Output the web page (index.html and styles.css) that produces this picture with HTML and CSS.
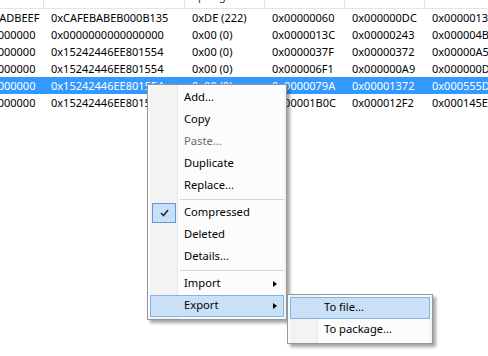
FILE: index.html
```html
<!DOCTYPE html>
<html lang="en">
<head>
  <meta charset="UTF-8">
  <title>Entries</title>
  <link rel="stylesheet" href="styles.css">
</head>
<body>
  <div class="view">
    <div class="grid">
      <div class="row head">
        <div class="cell c1"><span>Hash</span></div>
        <div class="cell c2"><span>Name hash</span></div>
        <div class="cell c3"><span>Spring</span></div>
        <div class="cell c4"><span>Offset</span></div>
        <div class="cell c5"><span>Size</span></div>
        <div class="cell c6"><span>Raw size</span></div>
      </div>
      <div class="row">
        <div class="cell c1">0xDEADBEEF</div>
        <div class="cell c2">0xCAFEBABEB000B135</div>
        <div class="cell c3">0xDE (222)</div>
        <div class="cell c4">0x00000060</div>
        <div class="cell c5">0x000000DC</div>
        <div class="cell c6">0x00000135</div>
      </div>
      <div class="row">
        <div class="cell c1">0x00000000</div>
        <div class="cell c2">0x0000000000000000</div>
        <div class="cell c3">0x00 (0)</div>
        <div class="cell c4">0x0000013C</div>
        <div class="cell c5">0x00000243</div>
        <div class="cell c6">0x000004BD</div>
      </div>
      <div class="row">
        <div class="cell c1">0x00000000</div>
        <div class="cell c2">0x15242446EE801554</div>
        <div class="cell c3">0x00 (0)</div>
        <div class="cell c4">0x0000037F</div>
        <div class="cell c5">0x00000372</div>
        <div class="cell c6">0x00000A53</div>
      </div>
      <div class="row">
        <div class="cell c1">0x00000000</div>
        <div class="cell c2">0x15242446EE801554</div>
        <div class="cell c3">0x00 (0)</div>
        <div class="cell c4">0x000006F1</div>
        <div class="cell c5">0x000000A9</div>
        <div class="cell c6">0x000000D2</div>
      </div>
      <div class="row selected">
        <div class="cell c1">0x00000000</div>
        <div class="cell c2">0x15242446EE801554</div>
        <div class="cell c3">0x00 (0)</div>
        <div class="cell c4">0x0000079A</div>
        <div class="cell c5">0x00001372</div>
        <div class="cell c6">0x000555D4</div>
      </div>
      <div class="row">
        <div class="cell c1">0x00000000</div>
        <div class="cell c2">0x15242446EE801554</div>
        <div class="cell c3">0x00 (0)</div>
        <div class="cell c4">0x00001B0C</div>
        <div class="cell c5">0x000012F2</div>
        <div class="cell c6">0x000145E0</div>
      </div>
    </div>

    <!-- context menu -->
    <div class="menu main-menu">
      <div class="item">Add...</div>
      <div class="item">Copy</div>
      <div class="item disabled">Paste...</div>
      <div class="item">Duplicate</div>
      <div class="item">Replace...</div>
      <div class="sep"></div>
      <div class="item checked">
        <span class="check">
          <svg width="9" height="8" viewBox="0 0 9 8"><path d="M1 4 L3.5 6.5 L8 1" fill="none" stroke="#1c2a3a" stroke-width="1.6"/></svg>
        </span>
        Compressed
      </div>
      <div class="item">Deleted</div>
      <div class="item">Details...</div>
      <div class="sep"></div>
      <div class="item sub">Import<span class="arrow"></span></div>
      <div class="item sub hot">Export<span class="arrow"></span></div>
    </div>

    <div class="menu sub-menu">
      <div class="item hot">To file...</div>
      <div class="item">To package...</div>
    </div>
  </div>
</body>
</html>
```

FILE: styles.css
```css
body {
  margin: 0;
  background: #fff;
  font-family: "Segoe UI", "Noto Sans", sans-serif;
  color: #000;
}
.view {
  position: relative;
  width: 488px;
  height: 356px;
  overflow: hidden;
}

.grid {
  margin-left: -34px;
  font-size: 11px;
}
.row {
  display: flex;
  height: 17px;
  line-height: 17px;
  white-space: nowrap;
}
.row.head {
  height: 8px;
  border-bottom: 1px solid #e5e5e5;
  color: #333;
}
.row.head .cell {
  border-right: 1px solid #e5e5e5;
  height: 8px;
}
.row.head span {
  display: block;
  margin-top: -13px;
}
.cell {
  padding-left: 7px;
  flex-shrink: 0;
  overflow: hidden;
  box-sizing: border-box;
}
.c1 { width: 78px; }
.c2 { width: 141px; }
.c3 { width: 80px; }
.c4 { width: 80px; }
.c5 { width: 80px; }
.c6 { width: 120px; }

.row.selected {
  background: #3399ff;
  color: #fff;
}

.menu {
  position: absolute;
  background: #fcfcfc;
  border: 1px solid #979797;
  padding: 2px;
  font-size: 11.2px;
  box-shadow: 3px 3px 3px rgba(0, 0, 0, 0.35);
  background-image: linear-gradient(to right, #f3f3f3 0, #f3f3f3 27px, #e6e6e6 27px, #e6e6e6 28px, #fcfcfc 28px);
  background-origin: content-box;
  background-clip: padding-box;
}
.main-menu {
  left: 147px;
  top: 84px;
  width: 134px;
}
.sub-menu {
  left: 287px;
  top: 294px;
  width: 140px;
}

.item {
  position: relative;
  height: 22px;
  line-height: 18px;
  padding-left: 33px;
  border: 1px solid transparent;
  box-sizing: border-box;
  color: #000;
}
.item.disabled {
  color: #6d6d6d;
}
.item.hot {
  background: #c9e0f7;
  border-color: #7eb4ea;
}
.sep {
  height: 1px;
  margin: 2px 0 2px 30px;
  background: #d7d7d7;
}

.check {
  position: absolute;
  left: 1px;
  top: 0;
  width: 22px;
  height: 18px;
  background: #c9e0f7;
  border: 1px solid #5a9ad8;
  display: flex;
  align-items: center;
  justify-content: center;
}

.arrow {
  position: absolute;
  right: 6px;
  top: 7px;
  width: 0;
  height: 0;
  border-top: 3.5px solid transparent;
  border-bottom: 3.5px solid transparent;
  border-left: 4px solid #000;
}
```
